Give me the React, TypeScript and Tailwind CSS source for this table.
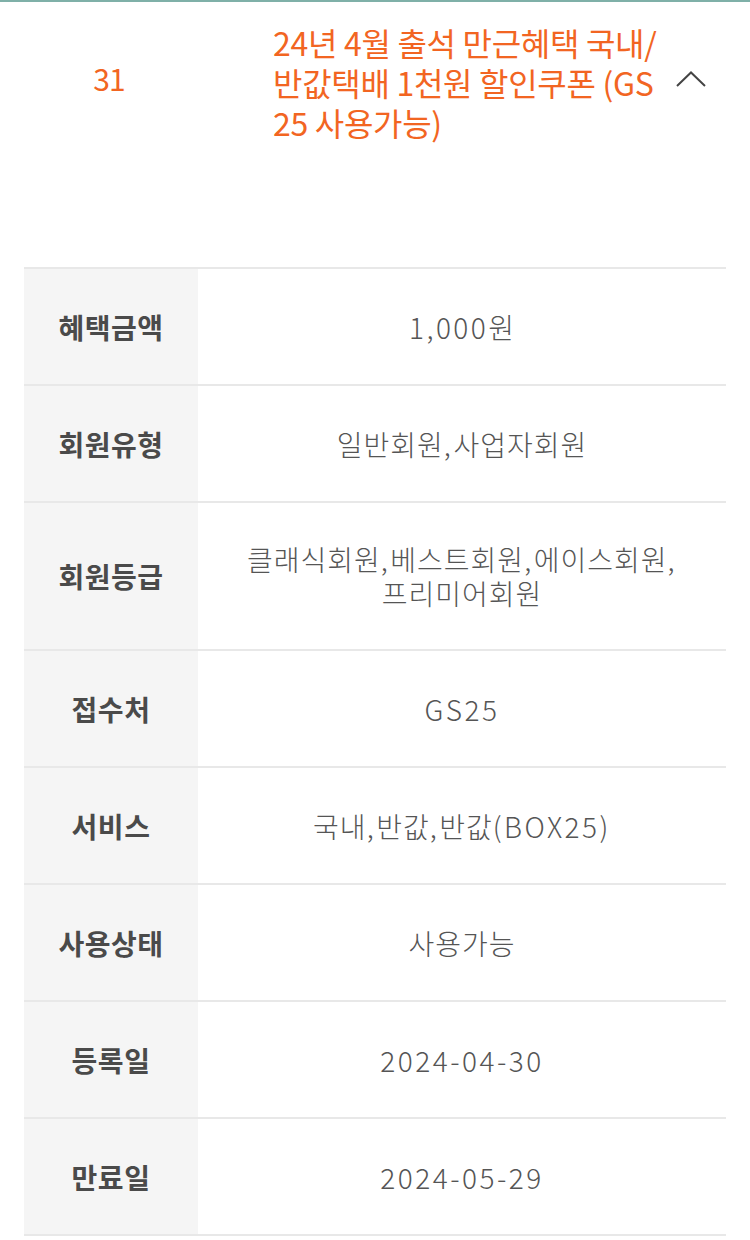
import React from 'react';

// latin/digit runs get their own letter-spacing so they spread like the reference font
function Txt({ text, latin }: { text: string; latin: string }) {
  const parts = text.split(/([\x00-\x7F]+)/).filter(Boolean);
  return (
    <>
      {parts.map((p, i) =>
        /^[\x00-\x7F]+$/.test(p) ? (
          <span key={i} className={latin}>
            {p}
          </span>
        ) : (
          <span key={i}>{p}</span>
        )
      )}
    </>
  );
}

const rows: { label: string; lines: string[]; tall?: boolean }[] = [
  { label: '혜택금액', lines: ['1,000원'] },
  { label: '회원유형', lines: ['일반회원,사업자회원'] },
  { label: '회원등급', lines: ['클래식회원,베스트회원,에이스회원,', '프리미어회원'], tall: true },
  { label: '접수처', lines: ['GS25'] },
  { label: '서비스', lines: ['국내,반값,반값(BOX25)'] },
  { label: '사용상태', lines: ['사용가능'] },
  { label: '등록일', lines: ['2024-04-30'] },
  { label: '만료일', lines: ['2024-05-29'] },
];

export default function App() {
  return (
    <div
      className="min-h-screen bg-white"
      style={{ fontFamily: '"Noto Sans CJK KR", "Noto Sans", sans-serif' }}
    >
      <div className="h-[2px] bg-[#7fb0a8]" />

      {/* Coupon header */}
      <div className="flex items-center pt-[20px] pr-[44px]">
        <div className="mb-[8px] w-[218px] text-center text-[30px] leading-none text-[#f26522] tracking-[-1px]">31</div>
        <div className="flex-1 pl-[55px] text-[32px] leading-[40px] text-[#f26522] tracking-[-0.3px]">
          24년 4월 출석 만근혜택 국내/
          <br />
          반값택배 1천원 할인쿠폰 (GS
          <br />
          25 사용가능)
        </div>
        <svg width="30" height="16" viewBox="0 0 30 16" fill="none" className="mb-[6px] ml-[10px]">
          <path d="M1 15 L15 1.5 L29 15" stroke="#444" strokeWidth="2" />
        </svg>
      </div>

      {/* Detail table */}
      <div className="mx-[24px] mt-[125px] border-t-2 border-[#e8e8e8]">
        {rows.map((row) => (
          <div key={row.label} className="flex border-b-2 border-[#e8e8e8]">
            <div
              className={`flex w-[174px] items-center justify-center bg-[#f5f5f5] text-[28px] font-bold text-[#4a4a4a] tracking-[0.5px] ${
                row.tall ? 'h-[146px]' : 'h-[115px]'
              }`}
            >
              {row.label}
            </div>
            <div className="flex flex-1 items-center justify-center text-center text-[28px] leading-[34px] font-light text-[#555] tracking-[1px]">
              <div>
                {row.lines.map((l, i) => (
                  <div key={i}>
                    <Txt text={l} latin="tracking-[2.5px]" />
                  </div>
                ))}
              </div>
            </div>
          </div>
        ))}
      </div>
    </div>
  );
}
